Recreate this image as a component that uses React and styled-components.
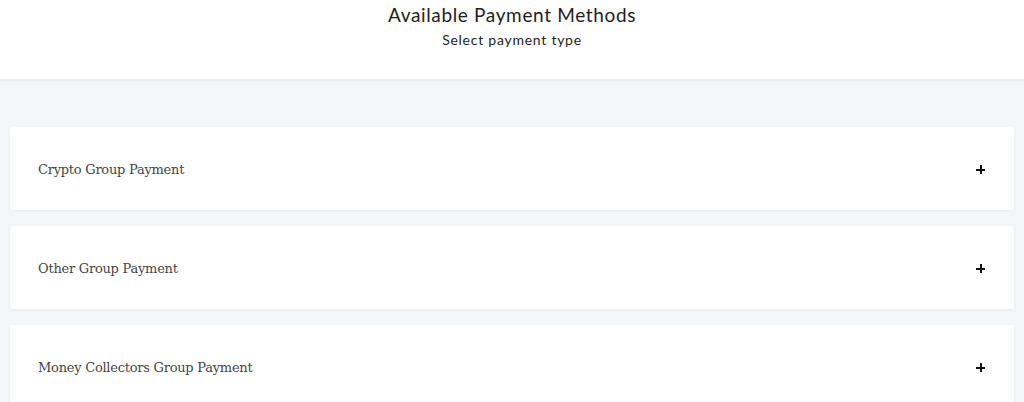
import React from 'react'
import styled, { createGlobalStyle } from 'styled-components'

const Global = createGlobalStyle`
    html, body {
        margin: 0;
        padding: 0;
        background: #f5f6f8;
    }
`
const Header = styled.header`
    height: 80px;
    background: #ffffff;
    box-shadow: 0 1px 2px rgba(0, 0, 0, 0.06);
    border-bottom: 1px solid #ececee;
    box-sizing: border-box;
    display: flex;
    flex-direction: column;
    align-items: center;
    padding-top: 3px;
    font-family: 'Lato', 'Liberation Sans', sans-serif;
    color: #1e1e1e;
`
const Title = styled.h1`
    margin: 0;
    font-size: 19px;
    font-weight: 400;
    line-height: 24px;
    letter-spacing: 0.65px;
`
const Subtitle = styled.p`
    margin: 4px 0 0;
    font-size: 14px;
    line-height: 18px;
    letter-spacing: 0.75px;
`
const Main = styled.main`
    padding: 47px 10px 0;
    display: flex;
    flex-direction: column;
    gap: 16px;
`
const Card = styled.div`
    height: 83px;
    background: #ffffff;
    border-radius: 3px;
    box-shadow: 0 1px 3px rgba(0, 0, 0, 0.06);
    display: flex;
    align-items: center;
    justify-content: space-between;
    padding: 2px 29px 0 28px;
    box-sizing: border-box;
    cursor: pointer;
`
const Label = styled.span`
    font-family: 'DejaVu Serif', 'Liberation Serif', serif;
    font-size: 13px;
    color: #454545;
    letter-spacing: -0.25px;
`
const Plus = styled.span`
    position: relative;
    width: 9px;
    height: 9px;
    &::before, &::after {
        content: '';
        position: absolute;
        background: #111;
    }
    &::before {
        left: 0;
        right: 0;
        top: 3.5px;
        height: 2px;
    }
    &::after {
        top: 0;
        bottom: 0;
        left: 3.5px;
        width: 2px;
    }
`

const groups = ['Crypto Group Payment', 'Other Group Payment', 'Money Collectors Group Payment']

const App = () => {
  return (
    <>
      <Global/>
      <Header>
        <Title>Available Payment Methods</Title>
        <Subtitle>Select payment type</Subtitle>
      </Header>
      <Main>
        {groups.map(g => (
          <Card key={g}>
            <Label>{g}</Label>
            <Plus/>
          </Card>
        ))}
      </Main>
    </>
  )
}

export default App
